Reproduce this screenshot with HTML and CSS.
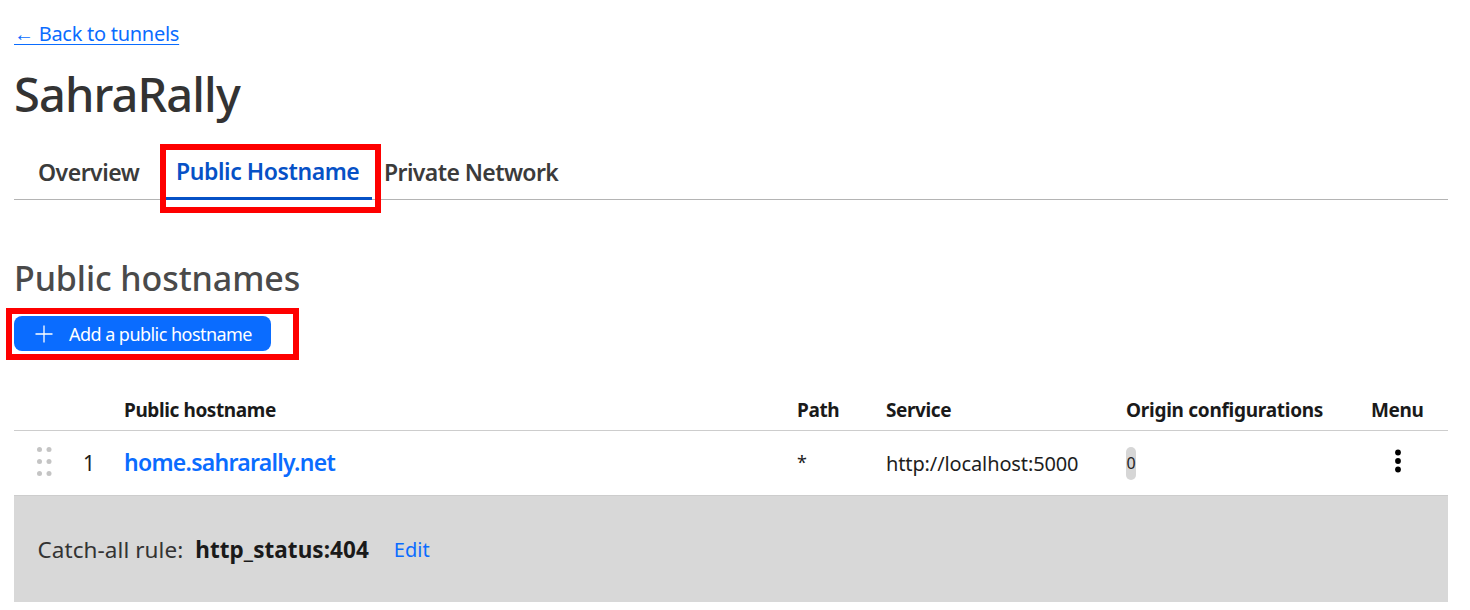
FILE: index.html
```html
<!DOCTYPE html>
<html lang="en">
<head>
<meta charset="utf-8">
<title>SahraRally</title>
<link rel="stylesheet" href="styles.css">
</head>
<body>
<main class="page">
  <a class="back" href="#">← Back to tunnels</a>
  <h1 class="title">SahraRally</h1>
  <nav class="tabs">
    <a class="tab tab-overview" href="#">Overview</a>
    <a class="tab tab-active" href="#">Public Hostname</a>
    <a class="tab tab-private" href="#">Private Network</a>
  </nav>
  <h2 class="section">Public hostnames</h2>
  <button class="add" type="button">
    <svg class="plus" width="18" height="18" viewBox="0 0 18 18"><path d="M9 0.5V17.5M0.5 9H17.5" stroke="#fff" stroke-width="1.3" fill="none"/></svg>
    <span>Add a public hostname</span>
  </button>
  <div class="table">
    <div class="row head">
      <div></div>
      <div></div>
      <div>Public hostname</div>
      <div>Path</div>
      <div>Service</div>
      <div class="origin">Origin configurations</div>
      <div>Menu</div>
    </div>
    <div class="row body">
      <div class="grip"><svg width="15" height="29" viewBox="0 0 15 29"><g fill="#c4c4c4"><circle cx="2.5" cy="2.5" r="2.5"/><circle cx="12" cy="2.5" r="2.5"/><circle cx="2.5" cy="14.5" r="2.5"/><circle cx="12" cy="14.5" r="2.5"/><circle cx="2.5" cy="26.5" r="2.5"/><circle cx="12" cy="26.5" r="2.5"/></g></svg></div>
      <div class="num">1</div>
      <div><a class="host" href="#">home.sahrarally.net</a></div>
      <div class="star">*</div>
      <div>http://localhost:5000</div>
      <div><span class="badge">0</span></div>
      <div class="menu"><svg width="8" height="26" viewBox="0 0 8 26"><g fill="#000"><circle cx="4" cy="4.5" r="2.9"/><circle cx="4" cy="13" r="2.9"/><circle cx="4" cy="21.5" r="2.9"/></g></svg></div>
    </div>
  </div>
  <div class="catch">
    <span class="catch-label">Catch-all rule:</span>
    <strong class="catch-value">http_status:404</strong>
    <a class="edit" href="#">Edit</a>
  </div>
</main>
<div class="mark mark-tab"></div>
<div class="mark mark-add"></div>
</body>
</html>
```
FILE: styles.css
```css
* { box-sizing: border-box; }
html, body { margin: 0; padding: 0; background: #fff; overflow: hidden; }
body { height: 610px; font-family: "Noto Sans", "Open Sans", sans-serif; color: #1d1d1d; position: relative; }
a { text-decoration: none; color: #0a6cff; }
.page { padding: 20px 22px 0 14px; display: flex; flex-direction: column; align-items: stretch; }
.back { font-size: 20px; line-height: 27px; height: 27px; text-decoration: underline; text-decoration-thickness: 1px; text-underline-offset: 3px; align-self: flex-start; letter-spacing: -0.27px; }
.title { margin: 16px 0 0; font-size: 47px; line-height: 62px; height: 62px; font-weight: 500; color: #333; letter-spacing: -0.9px; }
.tabs { display: flex; height: 56px; margin-top: 19px; padding-left: 8px; border-bottom: 1px solid #b4b4b4; }
.tab { font-size: 23px; line-height: 30px; font-weight: 600; color: #3b3b3b; letter-spacing: -0.42px; white-space: nowrap; }
.tab-overview { padding: 13px 0 0 24px; margin-left: -8px; width: 144px; letter-spacing: -0.5px; }
.tab-active { color: #0651c6; width: 206px; margin-left: 8px; padding: 12px 0 0 10px; border-bottom: 3px solid #0651c6; height: 56px; }
.tab-private { padding: 13px 0 0 12px; letter-spacing: -0.6px; }
.section { margin: 56px 0 0; font-size: 34px; line-height: 44px; height: 44px; font-weight: 500; color: #4a4a4a; letter-spacing: -0.1px; }
.add { margin-top: 16px; align-self: flex-start; width: 257px; height: 35px; border: 0; border-radius: 8px; background: #0a6cff; color: #fff; font: inherit; font-size: 18px; display: flex; align-items: center; padding: 0 0 0 21px; gap: 16px; letter-spacing: -0.54px; }
.plus { flex: none; }
.table { margin-top: 36px; }
.row { display: grid; grid-template-columns: 64px 46px 673px 89px 240px 245px 77px; }
.row > div { display: flex; align-items: center; padding-left: 0; }
.head { height: 44px; border-bottom: 1px solid #cdcdcd; font-size: 19px; font-weight: 700; letter-spacing: -0.4px; color: #1a1a1a; padding-top: 3px; }
.origin { letter-spacing: -0.27px; }
.body { height: 65px; font-size: 20px; border-bottom: 1px solid #cdcdcd; letter-spacing: -0.12px; }
.grip { padding-left: 23px !important; padding-bottom: 4px; }
.num { padding-left: 5px !important; font-size: 21px; }
.host { font-size: 23px; font-weight: 600; letter-spacing: -0.72px; position: relative; top: -1px; }
.star { font-size: 18px; padding-bottom: 3px; }
.badge { display: inline-flex; align-items: center; justify-content: center; width: 10px; height: 33px; border-radius: 5px; background: #d6d6d6; font-size: 16px; color: #222; letter-spacing: 0; }
.menu { padding-left: 22.5px !important; padding-bottom: 5px; }
.catch { height: 106px; background: #d8d8d8; display: flex; align-items: center; padding: 0 0 0 23.5px; font-size: 22.5px; }
.catch-label { color: #333; letter-spacing: 0.07px; }
.catch-value { font-weight: 700; color: #1a1a1a; margin-left: 12px; letter-spacing: 0.05px; }
.edit { margin-left: 25px; font-size: 20px; }
.mark { position: absolute; border: 6px solid #fe0000; pointer-events: none; }
.mark-tab { left: 160px; top: 144px; width: 221px; height: 69px; }
.mark-add { left: 6px; top: 308px; width: 293px; height: 52px; }
```
